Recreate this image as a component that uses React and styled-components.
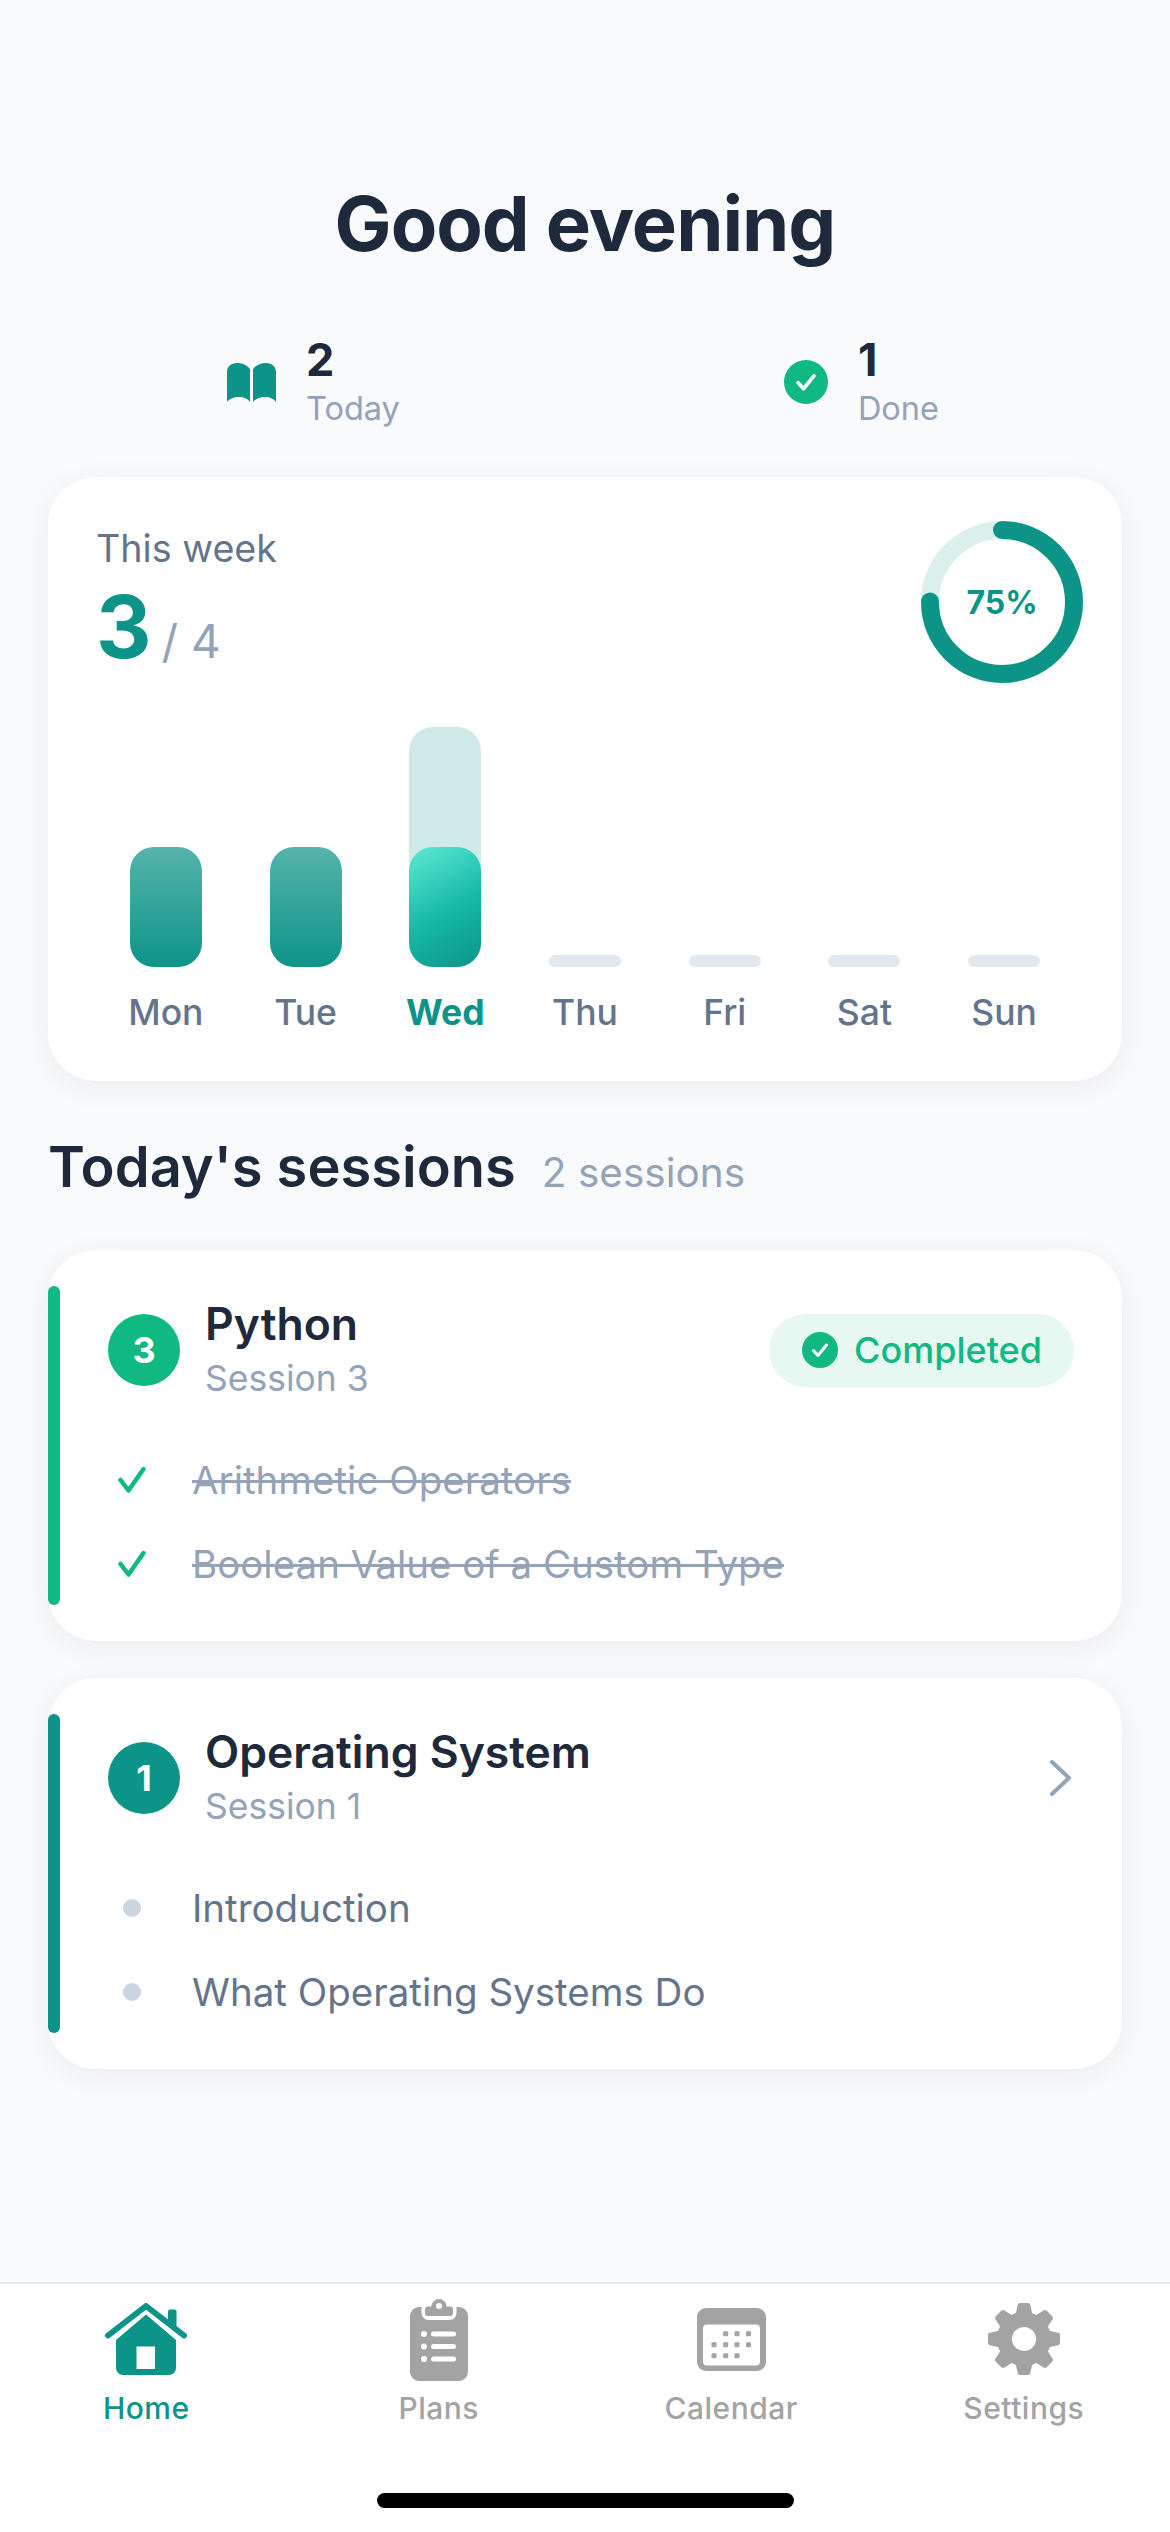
import React from "react";
import styled, { createGlobalStyle } from "styled-components";

const teal = "#0D9488";
const green = "#10B981";
const ink = "#1E293B";
const slate = "#64748B";
const muted = "#94A3B8";

const GlobalStyle = createGlobalStyle`
  html, body {
    margin: 0;
    padding: 0;
    background: #F8FAFC;
  }
  * {
    box-sizing: border-box;
  }
`;

const weekDays = [
  { day: "Mon", fill: 120 },
  { day: "Tue", fill: 120 },
  { day: "Wed", fill: 120, goal: 240, today: true },
  { day: "Thu" },
  { day: "Fri" },
  { day: "Sat" },
  { day: "Sun" },
];

const BookIcon = () => (
  <svg width="49" height="39" viewBox="0 0 49 39">
    <path
      d="M0 39V9C0 3 5 0 10 0c5 0 10 2 13 6v33c-2-3-6-5-11-5S2 36 0 39z"
      fill={teal}
    />
    <path
      d="M26 39V6c3-4 8-6 13-6s10 3 10 9v30c-2-3-6-5-11-5s-10 2-12 5z"
      fill={teal}
    />
  </svg>
);

const CheckCircle = ({ size }) => (
  <svg width={size} height={size} viewBox="0 0 36 36">
    <circle cx="18" cy="18" r="18" fill={green} />
    <path
      d="M11.500 18.500l4.500 5 8.500-10.500"
      fill="none"
      stroke="#fff"
      strokeWidth="3"
      strokeLinecap="round"
      strokeLinejoin="round"
    />
  </svg>
);

const TickIcon = () => (
  <svg width="28" height="28" viewBox="0 0 28 28">
    <path
      d="M2.500 14l8 10.500L25.500 3"
      fill="none"
      stroke={green}
      strokeWidth="4.500"
      strokeLinecap="round"
      strokeLinejoin="round"
    />
  </svg>
);

const ChevronIcon = () => (
  <svg width="21" height="36" viewBox="0 0 21 36">
    <path
      d="M2 2l17 16L2 34"
      fill="none"
      stroke={muted}
      strokeWidth="4"
      strokeLinecap="round"
      strokeLinejoin="round"
    />
  </svg>
);

const HomeIcon = () => (
  <svg width="84" height="72" viewBox="0 0 84 72">
    <path d="M64 8.500a2 2 0 0 1 2-2h4.500a2 2 0 0 1 2 2V28l-8.500-7z" fill={teal} />
    <path
      d="M4 32.500L42 3l38 29.500"
      fill="none"
      stroke={teal}
      strokeWidth="6"
      strokeLinecap="round"
      strokeLinejoin="round"
    />
    <path
      fillRule="evenodd"
      d="M12 37L42 11.500 72 37v28a7 7 0 0 1-7 7H19a7 7 0 0 1-7-7zM32.500 43.500V66H51V43.500z"
      fill={teal}
    />
  </svg>
);

const PlansIcon = () => (
  <svg width="58" height="83" viewBox="0 0 58 83">
    <path
      d="M11.500 9H9a9 9 0 0 0-9 9v56a9 9 0 0 0 9 9h40a9 9 0 0 0 9-9V18a9 9 0 0 0-9-9h-2.500v6a7 7 0 0 1-7 7H18.500a7 7 0 0 1-7-7z"
      fill="#A3A3A3"
    />
    <path
      fillRule="evenodd"
      d="M21.500 8.500a7.500 7.500 0 0 1 15 0H40a3 3 0 0 1 3 3V15a3 3 0 0 1-3 3H18a3 3 0 0 1-3-3v-3.500a3 3 0 0 1 3-3zM29 5a3 3 0 1 0 0 6 3 3 0 0 0 0-6z"
      fill="#A3A3A3"
    />
    {[36, 48.5, 61].map((y) => (
      <g key={y} fill="#fff">
        <circle cx="14" cy={y} r="3" />
        <rect x="21" y={y - 2.5} width="25" height="5" rx="2.500" />
      </g>
    ))}
  </svg>
);

const calendarDots = [
  [28.7, 25.7],
  [40, 25.7],
  [51.5, 25.7],
  [17, 36.7],
  [28.7, 36.7],
  [40, 36.7],
  [51.5, 36.7],
  [17, 47.7],
  [28.7, 47.7],
  [40, 47.7],
];

const CalendarIcon = () => (
  <svg width="69" height="63" viewBox="0 0 69 63">
    <rect width="69" height="63" rx="9" fill="#A3A3A3" />
    <rect x="6" y="16.500" width="57" height="41" rx="4" fill="#fff" />
    {calendarDots.map(([x, y]) => (
      <rect key={`${x}-${y}`} x={x - 2.5} y={y - 2.5} width="5" height="5" rx="1" fill="#A3A3A3" />
    ))}
  </svg>
);

const GearIcon = () => (
  <svg width="72" height="72" viewBox="0 0 72 72">
    <circle cx="36" cy="36" r="19.500" fill="none" stroke="#A3A3A3" strokeWidth="15" />
    {[0, 45, 90, 135, 180, 225, 270, 315].map((deg) => (
      <path
        key={deg}
        d="M27 14L29.500 3a3 3 0 0 1 3-3h7a3 3 0 0 1 3 3L45 14z"
        fill="#A3A3A3"
        transform={`rotate(${deg} 36 36)`}
      />
    ))}
  </svg>
);

const App = () => {
  const radius = 72;
  const circumference = 2 * Math.PI * radius;

  return (
    <Page>
      <GlobalStyle />
      <Main>
        <Title>Good evening</Title>

        <Stats>
          <Stat>
            <StatIcon>
              <BookIcon />
            </StatIcon>
            <div>
              <StatValue>2</StatValue>
              <StatLabel>Today</StatLabel>
            </div>
          </Stat>
          <Stat>
            <StatIcon>
              <CheckCircle size={44} />
            </StatIcon>
            <div>
              <StatValue>1</StatValue>
              <StatLabel>Done</StatLabel>
            </div>
          </Stat>
        </Stats>

        <WeekCard>
          <WeekHeader>
            <WeekText>
              <WeekLabel>This week</WeekLabel>
              <WeekCount>
                <WeekDone>3</WeekDone>
                <WeekTotal>/ 4</WeekTotal>
              </WeekCount>
            </WeekText>
            <Ring>
              <svg width="162" height="162" viewBox="0 0 162 162">
                <circle cx="81" cy="81" r={radius} fill="none" stroke="#DBF0EC" strokeWidth="18" />
                <circle
                  cx="81"
                  cy="81"
                  r={radius}
                  fill="none"
                  stroke={teal}
                  strokeWidth="18"
                  strokeLinecap="round"
                  strokeDasharray={`${circumference * 0.75} ${circumference}`}
                  transform="rotate(-90 81 81)"
                />
              </svg>
              <RingLabel>75%</RingLabel>
            </Ring>
          </WeekHeader>

          <Chart>
            {weekDays.map(({ day, fill, goal, today }) => (
              <DayColumn key={day}>
                <BarArea>
                  {goal && <GoalBar style={{ height: goal }} />}
                  {fill ? (
                    <FillBar $today={today} style={{ height: fill }} />
                  ) : (
                    <EmptyBar />
                  )}
                </BarArea>
                <DayName $today={today}>{day}</DayName>
              </DayColumn>
            ))}
          </Chart>
        </WeekCard>

        <SectionHeader>
          <SectionTitle>Today's sessions</SectionTitle>
          <SectionCount>2 sessions</SectionCount>
        </SectionHeader>

        <SessionCard $accent={green}>
          <SessionHeader>
            <SessionNumber $accent={green}>3</SessionNumber>
            <SessionInfo>
              <SessionName>Python</SessionName>
              <SessionSub>Session 3</SessionSub>
            </SessionInfo>
            <Badge>
              <CheckCircle size={36} />
              <BadgeText>Completed</BadgeText>
            </Badge>
          </SessionHeader>
          <TopicList>
            <Topic>
              <TopicMark>
                <TickIcon />
              </TopicMark>
              <TopicText $done>Arithmetic Operators</TopicText>
            </Topic>
            <Topic>
              <TopicMark>
                <TickIcon />
              </TopicMark>
              <TopicText $done>Boolean Value of a Custom Type</TopicText>
            </Topic>
          </TopicList>
        </SessionCard>

        <SessionCard $accent={teal}>
          <SessionHeader>
            <SessionNumber $accent={teal}>1</SessionNumber>
            <SessionInfo>
              <SessionName>Operating System</SessionName>
              <SessionSub>Session 1</SessionSub>
            </SessionInfo>
            <ChevronSlot>
              <ChevronIcon />
            </ChevronSlot>
          </SessionHeader>
          <TopicList>
            <Topic>
              <TopicMark>
                <Bullet />
              </TopicMark>
              <TopicText>Introduction</TopicText>
            </Topic>
            <Topic>
              <TopicMark>
                <Bullet />
              </TopicMark>
              <TopicText>What Operating Systems Do</TopicText>
            </Topic>
          </TopicList>
        </SessionCard>
      </Main>

      <TabBar>
        <Tabs>
          <Tab $active>
            <TabIcon>
              <HomeIcon />
            </TabIcon>
            Home
          </Tab>
          <Tab>
            <TabIcon>
              <PlansIcon />
            </TabIcon>
            Plans
          </Tab>
          <Tab>
            <TabIcon>
              <CalendarIcon />
            </TabIcon>
            Calendar
          </Tab>
          <Tab>
            <TabIcon>
              <GearIcon />
            </TabIcon>
            Settings
          </Tab>
        </Tabs>
        <HomeIndicator />
      </TabBar>
    </Page>
  );
};

export default App;

const Page = styled.div`
  width: 1170px;
  height: 2532px;
  display: flex;
  flex-direction: column;
  background: #f8fafc;
  font-family: Inter, "Liberation Sans", sans-serif;
  overflow: hidden;
`;

const Main = styled.main`
  flex: 1;
  padding: 178px 48px 0;
`;

const Title = styled.h1`
  margin: 0;
  height: 90px;
  font-size: 76px;
  line-height: 90px;
  font-weight: 700;
  letter-spacing: -1px;
  text-align: center;
  color: ${ink};
`;

const Stats = styled.div`
  display: flex;
  gap: 384px;
  margin-top: 65px;
  padding-left: 179px;
`;

const Stat = styled.div`
  display: flex;
  align-items: center;
  gap: 30px;
`;

const StatIcon = styled.div`
  display: flex;
`;

const StatValue = styled.div`
  font-size: 45px;
  line-height: 54px;
  font-weight: 700;
  color: ${ink};
`;

const StatLabel = styled.div`
  font-size: 32.5px;
  line-height: 44px;
  color: ${muted};
`;

const WeekCard = styled.section`
  height: 604px;
  margin-top: 46px;
  padding: 48px 48px 0;
  background: #fff;
  border-radius: 48px;
  box-shadow: 0 6px 30px rgba(15, 23, 42, 0.06);
`;

const WeekHeader = styled.div`
  display: flex;
  justify-content: space-between;
  align-items: flex-start;
  height: 172px;
  margin-right: -9px;
  margin-top: -4px;
`;

const WeekText = styled.div`
  padding-top: 3px;
`;

const WeekLabel = styled.div`
  font-size: 37.7px;
  line-height: 48px;
  color: ${slate};
`;

const WeekCount = styled.div`
  display: flex;
  align-items: baseline;
  gap: 10px;
  margin-top: 5px;
`;

const WeekDone = styled.span`
  font-size: 86px;
  line-height: 100px;
  font-weight: 700;
  color: ${teal};
`;

const WeekTotal = styled.span`
  font-size: 46px;
  color: ${muted};
`;

const Ring = styled.div`
  position: relative;
  width: 162px;
  height: 162px;
`;

const RingLabel = styled.div`
  position: absolute;
  inset: 0;
  display: flex;
  align-items: center;
  justify-content: center;
  font-size: 32px;
  font-weight: 700;
  color: ${teal};
`;

const Chart = styled.div`
  display: grid;
  grid-template-columns: repeat(7, 1fr);
  margin-top: 34px;
`;

const DayColumn = styled.div`
  display: flex;
  flex-direction: column;
  align-items: center;
`;

const BarArea = styled.div`
  position: relative;
  width: 72px;
  height: 240px;
  display: flex;
  align-items: flex-end;
`;

const GoalBar = styled.div`
  position: absolute;
  left: 0;
  bottom: 0;
  width: 100%;
  border-radius: 24px;
  background: rgba(13, 148, 136, 0.2);
`;

const FillBar = styled.div`
  position: relative;
  width: 100%;
  border-radius: 24px;
  background: ${({ $today }) =>
    $today
      ? "linear-gradient(150deg, #5EEAD4 0%, #14B8A6 55%, #0D9488 100%)"
      : "linear-gradient(180deg, rgba(13, 148, 136, 0.7) 0%, #0D9488 100%)"};
`;

const EmptyBar = styled.div`
  width: 100%;
  height: 12px;
  border-radius: 6px;
  background: #e2e8f0;
`;

const DayName = styled.div`
  margin-top: 24px;
  font-size: 35.5px;
  line-height: 44px;
  font-weight: ${({ $today }) => ($today ? 700 : 500)};
  color: ${({ $today }) => ($today ? teal : slate)};
`;

const SectionHeader = styled.div`
  display: flex;
  align-items: baseline;
  gap: 26px;
  margin: 53px 0 50px;
`;

const SectionTitle = styled.h2`
  margin: 0;
  font-size: 56px;
  line-height: 66px;
  font-weight: 600;
  color: ${ink};
`;

const SectionCount = styled.span`
  font-size: 40.5px;
  color: ${muted};
`;

const SessionCard = styled.section`
  position: relative;
  height: 391px;
  margin-top: 37px;
  padding: 50px 48px 0 60px;
  background: #fff;
  border-radius: 48px;
  box-shadow: 0 6px 30px rgba(15, 23, 42, 0.06);

  &::before {
    content: "";
    position: absolute;
    left: 0;
    top: 36px;
    bottom: 36px;
    width: 12px;
    border-radius: 6px;
    background: ${({ $accent }) => $accent};
  }
`;

const SessionHeader = styled.div`
  display: flex;
  align-items: center;
  height: 100px;
`;

const SessionNumber = styled.div`
  width: 72px;
  height: 72px;
  flex: none;
  display: flex;
  align-items: center;
  justify-content: center;
  border-radius: 50%;
  background: ${({ $accent }) => $accent};
  color: #fff;
  font-size: 36px;
  font-weight: 700;
`;

const SessionInfo = styled.div`
  flex: 1;
  margin-left: 25px;
`;

const SessionName = styled.div`
  font-size: 44.5px;
  line-height: 58px;
  font-weight: 600;
  color: ${ink};
`;

const SessionSub = styled.div`
  font-size: 35.5px;
  line-height: 52px;
  color: ${muted};
`;

const Badge = styled.div`
  display: flex;
  align-items: center;
  gap: 16px;
  height: 73px;
  padding: 0 32px 0 33px;
  border-radius: 37px;
  background: rgba(16, 185, 129, 0.1);
`;

const BadgeText = styled.span`
  font-size: 36px;
  font-weight: 500;
  color: ${green};
`;

const ChevronSlot = styled.div`
  display: flex;
  margin-right: 3px;
`;

const TopicList = styled.div`
  display: flex;
  flex-direction: column;
  gap: 36px;
  margin-top: 56px;
`;

const Topic = styled.div`
  display: flex;
  align-items: center;
  height: 48px;
`;

const TopicMark = styled.div`
  width: 48px;
  flex: none;
  display: flex;
  justify-content: center;
  margin-right: 36px;
`;

const Bullet = styled.div`
  width: 18px;
  height: 18px;
  border-radius: 50%;
  background: #cbd5e1;
`;

const TopicText = styled.span`
  font-size: 38.5px;
  color: ${({ $done }) => ($done ? muted : slate)};
  text-decoration: ${({ $done }) => ($done ? "line-through" : "none")};
`;

const TabBar = styled.nav`
  height: 250px;
  flex: none;
  background: #fff;
  border-top: 2px solid #e2e8f0;
`;

const Tabs = styled.div`
  display: grid;
  grid-template-columns: repeat(4, 1fr);
  height: 209px;
  padding-top: 11px;
`;

const Tab = styled.div`
  display: flex;
  flex-direction: column;
  align-items: center;
  font-size: 30px;
  line-height: 40px;
  font-weight: 500;
  letter-spacing: 0.5px;
  color: ${({ $active }) => ($active ? teal : "#A3A3A3")};
`;

const TabIcon = styled.div`
  height: 88px;
  display: flex;
  align-items: center;
  justify-content: center;
  margin-bottom: 5px;
`;

const HomeIndicator = styled.div`
  width: 417px;
  height: 15px;
  margin: 0 auto;
  border-radius: 8px;
  background: #000;
`;
